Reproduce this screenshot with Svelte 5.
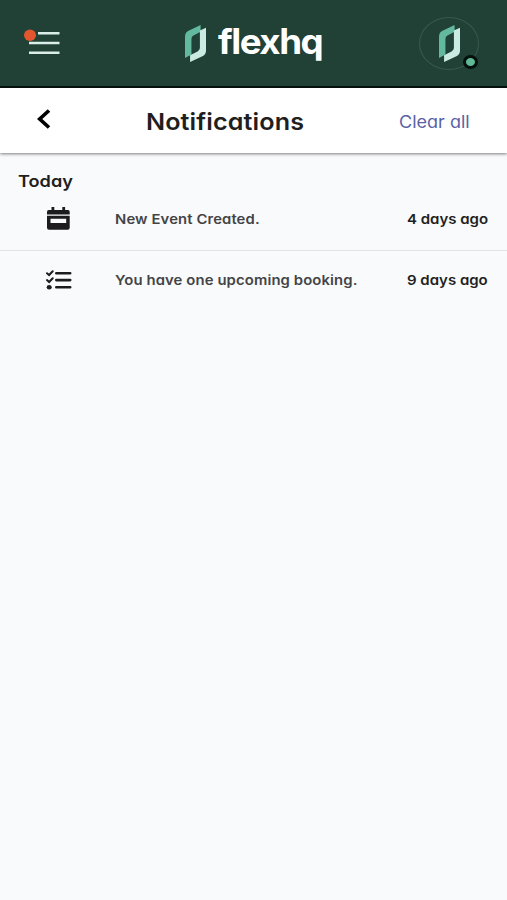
<script>
  let notifications = $state([
    { id: 1, icon: 'calendar', text: 'New Event Created.', time: '4 days ago' },
    { id: 2, icon: 'tasks', text: 'You have one upcoming booking.', time: '9 days ago' },
  ]);

  function clearAll() {
    notifications = [];
  }
</script>

{#snippet mark()}
  <svg class="mark" viewBox="0 0 62 109" preserveAspectRatio="none" aria-hidden="true">
    <path d="M0 97V35Q0 23 9 18L46 0V20L25 31Q19 34 19 41V87Z" fill="#63b8a0" />
    <path d="M44 16L62 8V76Q62 86 53 91L15 109V89L37 78Q44 74 44 68Z" fill="#c9ebe1" />
  </svg>
{/snippet}

<div class="page">
  <header class="topbar">
    <button class="menu" title="Menu">
      <svg width="38" height="28" viewBox="0 0 38 28">
        <path d="M14 4.3H35.5M5 14.1H35.5M5 23.8H35.5" stroke="#d9eee8" stroke-width="2.5" />
        <ellipse cx="6" cy="6.3" rx="6" ry="5.7" fill="#e2562f" />
      </svg>
    </button>
    <div class="brand">
      {@render mark()}
      <span class="brand-name">flexhq</span>
    </div>
    <div class="avatar">
      {@render mark()}
      <span class="status"></span>
    </div>
  </header>

  <div class="titlebar">
    <button class="back" title="Back">
      <svg width="14" height="20" viewBox="0 0 14 20">
        <path d="M12 1.5L2.7 10L12 18.5" fill="none" stroke="#000" stroke-width="3.7" />
      </svg>
    </button>
    <h1>Notifications</h1>
    <button class="clear" onclick={clearAll}>Clear all</button>
  </div>

  <main>
    <h2>Today</h2>
    {#each notifications as item (item.id)}
      <div class="row">
        <span class="icon">
          {#if item.icon === 'calendar'}
            <svg class="calendar" width="23" height="23" viewBox="0 0 23 23">
              <path d="M4.5 0H7.3V3H15.3V0H18.1V3H21Q22.7 3 22.7 4.7V7.4H0V4.7Q0 3 1.7 3H4.5Z" fill="#1c1c1e" />
              <path d="M0 8.8H22.7V20.8Q22.7 22.8 20.7 22.8H2Q0 22.8 0 20.8ZM3.5 11.8V16H19.2V11.8Z" fill="#1c1c1e" fill-rule="evenodd" />
            </svg>
          {:else}
            <svg width="26" height="20" viewBox="0 0 26 20">
              <path d="M10.3 3.2H24.2M10.3 10.1H24.2M10.3 17.2H24.2" stroke="#1c1c1e" stroke-width="2.6" stroke-linecap="round" />
              <path d="M1 3.2L3.1 5L6.7 1.2M1 10.1L3.1 12L6.7 8.2" fill="none" stroke="#1c1c1e" stroke-width="2" stroke-linecap="round" />
              <ellipse cx="3.2" cy="17.2" rx="2.5" ry="2.2" fill="#1c1c1e" />
            </svg>
          {/if}
        </span>
        <span class="text">{item.text}</span>
        <span class="time">{item.time}</span>
      </div>
    {/each}
  </main>
</div>

<style>
  :global(body) {
    background: #f9fafc;
  }

  .page {
    min-height: 900px;
    background: #f9fafc;
    font-family: Inter, "Open Sans", sans-serif;
    font-feature-settings: "cv11";
    color: #1f1f21;
  }

  button {
    padding: 0;
    border: none;
    background: transparent;
    font: inherit;
    font-feature-settings: inherit;
    cursor: pointer;
  }

  svg { display: block; }

  .topbar {
    display: flex;
    align-items: center;
    justify-content: space-between;
    height: 88px;
    box-sizing: border-box;
    padding: 0 28px 0 24px;
    border-bottom: 2px solid #06110d;
    background: #214036;
  }

  .mark {
    flex-shrink: 0;
    width: 21px;
    height: 37px;
  }

  .brand {
    display: flex;
    align-items: center;
    gap: 12px;
    width: 139px;
    margin-left: 27px;
  }

  .brand-name {
    padding-bottom: 4px;
    color: #fff;
    font-size: 35px;
    font-weight: 700;
    line-height: 40px;
    letter-spacing: -1.4px;
    transform: scaleX(1.05);
    transform-origin: left;
  }

  .avatar {
    position: relative;
    display: flex;
    align-items: center;
    justify-content: center;
    width: 60px;
    height: 53px;
    box-sizing: border-box;
    border: 1px solid #38594d;
    border-radius: 50%;
  }

  .status {
    position: absolute;
    right: 0;
    bottom: 0;
    width: 15px;
    height: 14px;
    box-sizing: border-box;
    border: 3px solid #03100c;
    border-radius: 50%;
    background: #5fb896;
  }

  .titlebar {
    display: grid;
    grid-template-columns: 108px 1fr 108px;
    align-items: center;
    height: 65px;
    background: #fff;
    box-shadow: 0 1px 3px rgba(0, 0, 0, 0.5);
  }

  .back {
    margin: 0 0 3px 37px;
    justify-self: start;
  }

  h1 {
    justify-self: start;
    margin: 0 0 0 38px;
    padding-top: 2px;
    font-size: 23.5px;
    font-weight: 600;
    line-height: 30px;
    letter-spacing: 0.1px;
    transform: scaleX(1.07);
    transform-origin: left;
  }

  .clear {
    padding-top: 2px;
    justify-self: start;
    color: #5a62a5;
    font-size: 17px;
    white-space: nowrap;
    transform: scaleX(1.06);
    transform-origin: left;
  }

  main {
    padding-top: 18px;
  }

  h2 {
    width: max-content;
    margin: 0 0 1px 18px;
    font-size: 16.5px;
    font-weight: 600;
    line-height: 20px;
    transform: scaleX(1.1);
    transform-origin: left;
  }

  .row {
    display: grid;
    grid-template-columns: 69px 1fr auto;
    align-items: center;
    height: 60px;
    box-sizing: border-box;
    padding: 0 19px 3px 46px;
    font-size: 13.5px;
    font-weight: 600;
  }

  .row:first-of-type {
    height: 59px;
    padding-bottom: 4px;
    border-bottom: 1px solid #e1e3e5;
  }

  .calendar {
    margin: 0 0 1px 1px;
  }

  .text {
    justify-self: start;
    color: #444447;
    letter-spacing: 0.1px;
    transform: scaleX(1.1);
    transform-origin: left;
  }

  .time {
    white-space: nowrap;
    transform: scaleX(1.11);
    transform-origin: right;
  }
</style>
